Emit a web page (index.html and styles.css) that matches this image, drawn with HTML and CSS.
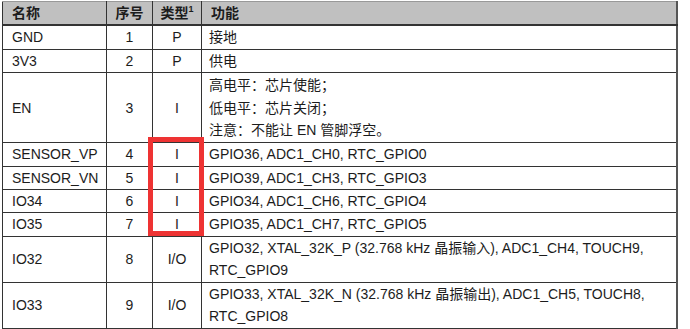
FILE: index.html
```html
<!DOCTYPE html>
<html lang="zh">
<head>
<meta charset="utf-8">
<link rel="stylesheet" href="styles.css">
</head>
<body>
<div class="wrap">
<table class="pins">
  <colgroup>
    <col class="c-name"><col class="c-no"><col class="c-type"><col class="c-func">
  </colgroup>
  <thead>
    <tr class="head">
      <th class="left">名称</th>
      <th>序号</th>
      <th>类型<sup>1</sup></th>
      <th class="left">功能</th>
    </tr>
  </thead>
  <tbody>
    <tr><td>GND</td><td class="mid">1</td><td class="mid">P</td><td>接地</td></tr>
    <tr><td>3V3</td><td class="mid">2</td><td class="mid">P</td><td>供电</td></tr>
    <tr class="en"><td>EN</td><td class="mid">3</td><td class="mid">I</td><td>高电平：芯片使能；<br>低电平：芯片关闭；<br>注意：不能让 EN 管脚浮空。</td></tr>
    <tr><td>SENSOR_VP</td><td class="mid">4</td><td class="mid">I</td><td>GPIO36, ADC1_CH0, RTC_GPIO0</td></tr>
    <tr><td>SENSOR_VN</td><td class="mid">5</td><td class="mid">I</td><td>GPIO39, ADC1_CH3, RTC_GPIO3</td></tr>
    <tr><td>IO34</td><td class="mid">6</td><td class="mid">I</td><td>GPIO34, ADC1_CH6, RTC_GPIO4</td></tr>
    <tr><td>IO35</td><td class="mid">7</td><td class="mid">I</td><td>GPIO35, ADC1_CH7, RTC_GPIO5</td></tr>
    <tr class="two"><td>IO32</td><td class="mid">8</td><td class="mid">I/O</td><td>GPIO32, XTAL_32K_P (32.768 kHz 晶振输入), ADC1_CH4, TOUCH9,<br>RTC_GPIO9</td></tr>
    <tr class="two"><td>IO33</td><td class="mid">9</td><td class="mid">I/O</td><td>GPIO33, XTAL_32K_N (32.768 kHz 晶振输出), ADC1_CH5, TOUCH8,<br>RTC_GPIO8</td></tr>
  </tbody>
</table>
<div class="highlight"></div>
</div>
</body>
</html>
```
FILE: styles.css
```css
html, body {
  margin: 0;
  padding: 0;
  background: #ffffff;
}
body {
  padding: 1px 0 0 2px;
  font-family: "Liberation Sans", "Noto Sans CJK SC", sans-serif;
  font-size: 14px;
  color: #1c1c1c;
}
.wrap {
  position: relative;
  width: 676px;
}
.pins {
  border-collapse: collapse;
  table-layout: fixed;
  width: 676px;
  border-left: 1px solid #444;
  border-right: 2px solid #555;
  border-top: 1px solid #999;
  border-bottom: 1px solid #333;
}
.c-name { width: 104px; }
.c-no { width: 46px; }
.c-type { width: 49px; }
.c-func { width: auto; }
.pins th, .pins td {
  padding: 0 0 0 9px;
  line-height: 22.4px;
  border: 1px solid #333;
  vertical-align: middle;
  white-space: nowrap;
}
.pins td:last-child, .pins th:last-child {
  padding-left: 7px;
}
.pins th {
  background: #c0c0c0;
  font-weight: bold;
  text-align: center;
  height: 22px;
  padding-left: 0;
  border-bottom: 2px solid #333;
  border-top: 1px solid #999;
}
.pins th.left {
  text-align: left;
  padding-left: 9px;
}
.pins th sup {
  font-size: 9px;
  line-height: 0;
  vertical-align: 6px;
}
.pins td.mid {
  text-align: center;
  padding-left: 0;
}
.en td { height: 69px; }
.two td { height: 45px; }
.highlight {
  position: absolute;
  left: 146px;
  top: 136px;
  width: 46px;
  height: 89px;
  border: 5px solid #ee3333;
}
```
